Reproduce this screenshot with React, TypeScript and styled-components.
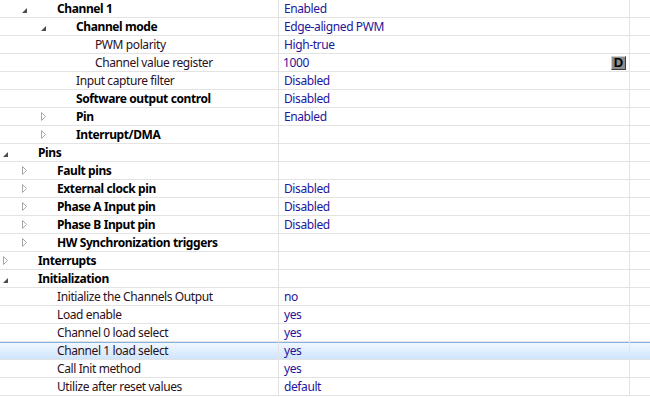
import * as React from 'react';
import styled, { createGlobalStyle, css } from 'styled-components';

type Expander = 'open' | 'closed' | null;

interface RowData {
  label: string;
  value?: string;
  level: number;
  bold?: boolean;
  expander?: Expander;
  selected?: boolean;
  button?: string;
}

const rows: RowData[] = [
  { label: 'Channel 1', value: 'Enabled', level: 1, bold: true, expander: 'open' },
  { label: 'Channel mode', value: 'Edge-aligned PWM', level: 2, bold: true, expander: 'open' },
  { label: 'PWM polarity', value: 'High-true', level: 3 },
  { label: 'Channel value register', value: '1000', level: 3, button: 'D' },
  { label: 'Input capture filter', value: 'Disabled', level: 2 },
  { label: 'Software output control', value: 'Disabled', level: 2, bold: true },
  { label: 'Pin', value: 'Enabled', level: 2, bold: true, expander: 'closed' },
  { label: 'Interrupt/DMA', level: 2, bold: true, expander: 'closed' },
  { label: 'Pins', level: 0, bold: true, expander: 'open' },
  { label: 'Fault pins', level: 1, bold: true, expander: 'closed' },
  { label: 'External clock pin', value: 'Disabled', level: 1, bold: true, expander: 'closed' },
  { label: 'Phase A Input pin', value: 'Disabled', level: 1, bold: true, expander: 'closed' },
  { label: 'Phase B Input pin', value: 'Disabled', level: 1, bold: true, expander: 'closed' },
  { label: 'HW Synchronization triggers', level: 1, bold: true, expander: 'closed' },
  { label: 'Interrupts', level: 0, bold: true, expander: 'closed' },
  { label: 'Initialization', level: 0, bold: true, expander: 'open' },
  { label: 'Initialize the Channels Output', value: 'no', level: 1 },
  { label: 'Load enable', value: 'yes', level: 1 },
  { label: 'Channel 0 load select', value: 'yes', level: 1 },
  { label: 'Channel 1 load select', value: 'yes', level: 1, selected: true },
  { label: 'Call Init method', value: 'yes', level: 1 },
  { label: 'Utilize after reset values', value: 'default', level: 1 },
];

const GlobalStyle = createGlobalStyle`
  html, body {
    margin: 0;
    padding: 0;
    background: #ffffff;
  }
  body {
    font-family: "Noto Sans", "Open Sans", sans-serif;
    font-size: 12px;
    letter-spacing: -0.4px;
  }
`;

const Grid = styled.div`
  width: 650px;
  height: 398px;
  overflow: hidden;
  display: flex;
  flex-direction: column;
`;

const Row = styled.div<{ $selected?: boolean }>`
  display: flex;
  height: 17px;
  border-bottom: 1px solid #e3e3e3;
  line-height: 17px;
  white-space: nowrap;
  ${(p) =>
    p.$selected &&
    css`
      background: linear-gradient(#f3f8ff, #cfe5fd);
      box-shadow: inset 0 1px 0 #86b2e2;
    `}
`;

const LabelCell = styled.div<{ $level: number }>`
  width: 279px;
  box-sizing: border-box;
  border-right: 1px solid #e3e3e3;
  padding-left: ${(p) => p.$level * 19}px;
  display: flex;
  align-items: center;
  overflow: hidden;
`;

const ToggleBox = styled.span`
  width: 38px;
  height: 17px;
  flex: none;
  display: flex;
  align-items: center;
  padding-left: 2px;
  box-sizing: border-box;
`;

const Label = styled.span<{ $bold?: boolean }>`
  color: ${(p) => (p.$bold ? '#000000' : '#2a1020')};
  font-weight: ${(p) => (p.$bold ? 700 : 400)};
`;

const ValueCell = styled.div`
  width: 351px;
  box-sizing: border-box;
  border-right: 1px solid #e3e3e3;
  padding-left: 5px;
  padding-right: 3px;
  display: flex;
  align-items: center;
  justify-content: space-between;
`;

const Value = styled.span<{ $edit?: boolean }>`
  color: #24159a;
  margin-left: ${(p) => (p.$edit ? -1 : 0)}px;
`;

const Filler = styled.div`
  flex: 1;
`;

const EditButton = styled.span`
  flex: none;
  width: 15px;
  height: 14px;
  margin-top: 1px;
  box-sizing: border-box;
  background: #8c8c8c;
  border: 1px solid #3c3c3c;
  border-top-color: #d0d0d0;
  border-left-color: #d0d0d0;
  color: #000;
  font-family: "Liberation Sans", Arial, sans-serif;
  font-weight: 700;
  font-size: 13px;
  letter-spacing: 0;
  line-height: 12px;
  text-align: center;
`;

const Triangle = ({ kind }: { kind: Expander }) => {
  if (kind === 'open') {
    return (
      <svg width="8" height="17" viewBox="0 0 8 17">
        <polygon points="6,8 6,13 1,13" fill="#4d4d4d" />
      </svg>
    );
  }
  if (kind === 'closed') {
    return (
      <svg width="8" height="17" viewBox="0 0 8 17">
        <polygon points="1.5,4.5 5.5,8.5 1.5,12.5" fill="none" stroke="#a8a8a8" strokeWidth="1" />
      </svg>
    );
  }
  return null;
};

const App = () => (
  <>
    <GlobalStyle />
    <Grid>
      {rows.map((r, i) => (
        <Row key={i} $selected={r.selected}>
          <LabelCell $level={r.level}>
            <ToggleBox>
              <Triangle kind={r.expander || null} />
            </ToggleBox>
            <Label $bold={r.bold}>{r.label}</Label>
          </LabelCell>
          <ValueCell>
            <Value $edit={!!r.button}>{r.value}</Value>
            {r.button && <EditButton>{r.button}</EditButton>}
          </ValueCell>
          <Filler />
        </Row>
      ))}
    </Grid>
  </>
);

export default App;
